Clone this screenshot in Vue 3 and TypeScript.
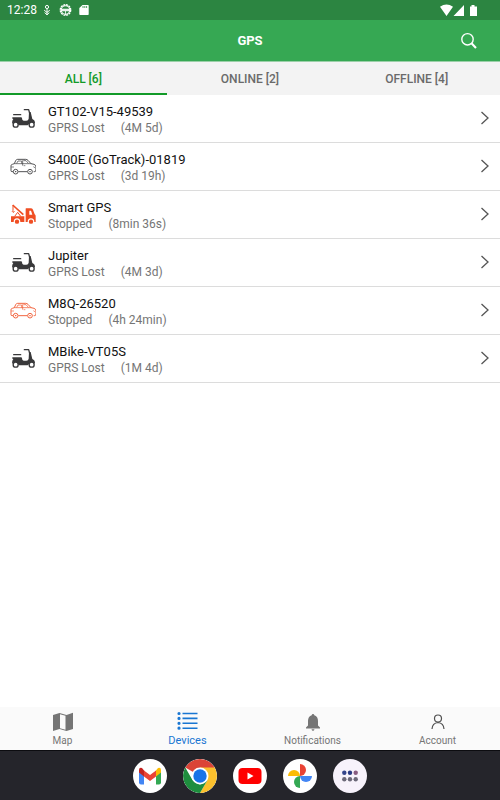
<script setup lang="ts">
import { computed, ref } from 'vue'

type Kind = 'scooter' | 'car' | 'tow'

interface Device {
  name: string
  status: string
  since: string
  kind: Kind
  stopped: boolean
}

const devices: Device[] = [
  { name: 'GT102-V15-49539', status: 'GPRS Lost', since: '(4M 5d)', kind: 'scooter', stopped: false },
  { name: 'S400E (GoTrack)-01819', status: 'GPRS Lost', since: '(3d 19h)', kind: 'car', stopped: false },
  { name: 'Smart GPS', status: 'Stopped', since: '(8min 36s)', kind: 'tow', stopped: true },
  { name: 'Jupiter', status: 'GPRS Lost', since: '(4M 3d)', kind: 'scooter', stopped: false },
  { name: 'M8Q-26520', status: 'Stopped', since: '(4h 24min)', kind: 'car', stopped: true },
  { name: 'MBike-VT05S', status: 'GPRS Lost', since: '(1M 4d)', kind: 'scooter', stopped: false },
]

const active = ref(0)
const tabs = computed(() => {
  const online = devices.filter((d) => d.stopped).length
  return [`ALL [${devices.length}]`, `ONLINE [${online}]`, `OFFLINE [${devices.length - online}]`]
})
const shown = computed(() =>
  devices.filter((d) => active.value === 0 || d.stopped === (active.value === 1)),
)
</script>

<template>
  <div class="screen">
    <div class="status">
      <time class="clock">12:28</time>
      <svg class="mic" width="8" height="12" viewBox="0 0 8 12" fill="none" stroke="currentColor">
        <circle cx="4" cy="3" r="1.6" />
        <path d="M4 5v6M1.2 6.2 4 8.4l2.800-2.200M1.600 8.500 4 10.800l2.400-2.300" />
      </svg>
      <svg class="gear" width="13" height="12" viewBox="0 0 13 12" fill="none" stroke="currentColor">
        <circle cx="6.500" cy="6" r="5.200" stroke-width="1.400" stroke-dasharray="2 .7" />
        <circle cx="6.500" cy="6" r="4.200" stroke-width="1.100" />
        <path d="M3 5.200h7v1.600H3zM6.500 7v4" fill="currentColor" stroke-width=".8" />
      </svg>
      <svg class="card" width="10" height="12" viewBox="0 0 10 12">
        <path d="M3.500 1H9q.7 0 .7.7v8.600q0 .7-.7.7H1q-.7 0-.7-.7V4z" fill="currentColor" />
        <path d="M4 2v2M5.800 2v2M7.600 2v2" stroke="#2c8541" stroke-width=".8" />
      </svg>
      <span class="spacer"></span>
      <svg width="38" height="14" viewBox="0 0 38 14" fill="currentColor">
        <path d="M0 3.800Q6.500-.8 13 3.800L6.500 13zM24 2V13H13.500zM30 3.500h1.500V2h3v1.500H37V13h-7z" />
      </svg>
    </div>

    <header class="bar">
      <h1>GPS</h1>
      <button class="search" type="button" aria-label="Search">
        <svg width="18" height="18" viewBox="0 0 18 18" fill="none" stroke="currentColor">
          <circle cx="7.500" cy="7.300" r="5.700" stroke-width="1.400" />
          <path d="m11.500 11.300 4.500 4.700" stroke-width="2.100" />
        </svg>
      </button>
    </header>

    <div class="tabs" role="tablist">
      <button
        v-for="(tab, i) in tabs"
        :key="i"
        type="button"
        role="tab"
        :aria-selected="active === i"
        :class="{ active: active === i }"
        @click="active = i"
      >{{ tab }}</button>
    </div>

    <main>
      <ul class="list">
        <li v-for="d in shown" :key="d.name">
          <button class="row" type="button">
            <svg class="vehicle" :class="{ stopped: d.stopped }" width="26" height="24" viewBox="0 0 78 72">
              <g v-if="d.kind === 'scooter'">
                <path d="M11 26h21" stroke="currentColor" stroke-width="4" stroke-linecap="round" />
                <path d="M43 11h13l3 11" fill="none" stroke="currentColor" stroke-width="4" stroke-linecap="round" stroke-linejoin="round" />
                <path d="M7 34h26q3 0 3 3 0 7 5 7h8q6 0 7-6l1-20h5l5 21q8 3 8 13H63q-6 0-9 5-1 1-3 1H27q-10-14-21-5 0-10 4-14l-3-1z" fill="currentColor" />
                <circle cx="17" cy="56" r="7.500" fill="#fff" stroke="currentColor" stroke-width="4" />
                <circle cx="65" cy="56" r="7.500" fill="#fff" stroke="currentColor" stroke-width="4" />
              </g>
              <g v-else-if="d.kind === 'car'" fill="none" stroke="currentColor" stroke-width="2.600" stroke-linejoin="round">
                <path d="M9 53H6q-3 0-3-3V35q0-3 4-4l6-2 4-9q2-4 6-4h24q4 0 7 3l9 10 9 2q6 2 6 8v9q0 5-5 5h-2M25 53h27" />
                <path d="M13 29h50M20 28l4-7h11v8M40 20h8l7 8M38 19v16" stroke-width="2" />
                <path d="M4 39h8M70 38l6 4M41 35h5" stroke-width="1.800" />
                <circle cx="17" cy="53" r="7" /><circle cx="60" cy="53" r="7" />
                <path d="M15 53h4M58 53h4" stroke-width="3" />
              </g>
              <g v-else fill="currentColor">
                <path d="M3 43h40v17H31q0-11-10-11t-10 11H3zM48 19h14q5 0 7 4l5 14q3 2 3 5v18h-4q0-11-10-11t-10 11h-6V21q0-2 1-2z" />
                <path d="M58 26h5l4 12h-9z" fill="#fff" />
                <path d="m8 9 32 29" stroke="currentColor" stroke-width="5" />
                <path d="M9 10v15q-4 4 0 6 4-1 4-4M14 43l9-12 9 12" fill="none" stroke="currentColor" stroke-width="3" />
                <circle cx="21" cy="59" r="6.500" /><circle cx="63" cy="59" r="6.500" />
              </g>
            </svg>
            <span class="info">
              <span class="name">{{ d.name }}</span>
              <span class="detail"><span>{{ d.status }}</span><span>{{ d.since }}</span></span>
            </span>
            <svg class="chevron" width="10" height="14" viewBox="0 0 10 14" fill="none" stroke="currentColor" stroke-width="1.300">
              <path d="m1.500 1 6.500 6-6.500 6" />
            </svg>
          </button>
        </li>
      </ul>
    </main>

    <nav class="nav">
      <a href="#map">
        <svg width="22" height="20" viewBox="0 0 22 20">
          <path d="m1 3 6.500-2 7 2L21 .8V17l-6.500 2-7-2L1 19z" fill="currentColor" />
          <path d="m8 2.200 5.500 1.500v14L8 16.200z" fill="#fafafa" />
        </svg>
        <span>Map</span>
      </a>
      <a href="#devices" class="current" aria-current="page">
        <svg width="22" height="20" viewBox="0 0 22 20" fill="none" stroke="currentColor">
          <path d="M5.500 2.500h15M5.500 7.400h15M5.500 12.300h15M5.500 17.200h15" stroke-width="1.600" />
          <path d="M2 2.500h.01M2 7.400h.01M2 12.300h.01M2 17.200h.01" stroke-width="3.200" stroke-linecap="round" />
        </svg>
        <span>Devices</span>
      </a>
      <a href="#notifications">
        <svg width="22" height="20" viewBox="0 0 22 20" fill="currentColor">
          <path d="M11 2q1.200 0 1.300 1.300Q16 4.500 16 9v4.500l2 2v1H4v-1l2-2V9q0-4.500 3.700-5.700Q9.800 2 11 2zM9.500 17.200h3q-.3 1.500-1.500 1.500t-1.500-1.500z" />
        </svg>
        <span>Notifications</span>
      </a>
      <a href="#account">
        <svg width="22" height="20" viewBox="0 0 22 20" fill="none" stroke="#505050" stroke-width="1.200">
          <circle cx="11" cy="6.500" r="3.500" />
          <path d="M5 17q.4-6 6-6.500 5.600.5 6 6.500" />
        </svg>
        <span>Account</span>
      </a>
    </nav>

    <footer class="dock">
      <button type="button" aria-label="Gmail">
        <svg viewBox="0 0 34 34">
          <path d="M6 12v11.500q0 2 2 2h3V15z" fill="#4285f4" />
          <path d="M28 12v11.500q0 2-2 2h-3V15z" fill="#34a853" />
          <path d="M23 11.500v6l5-4V11q0-3-3-2z" fill="#fbbc04" />
          <path d="m11 11.500 6 4.500 6-4.500v6L17 22l-6-4.500z" fill="#ea4335" />
          <path d="M11 11.500v6l-5-4V11q0-3 3-2z" fill="#c5221f" />
        </svg>
      </button>
      <button type="button" aria-label="Chrome">
        <svg viewBox="0 0 34 34">
          <path d="M17 17 2.300 8.500A17 17 0 0 1 31.700 8.500z" fill="#db4437" />
          <path d="M17 17v-8.500h14.700A17 17 0 0 1 17 34l7.400-12.700z" fill="#fbc02d" />
          <path d="m9.600 21.300 7.400 4.200 7.400-4.200L17 34A17 17 0 0 1 2.300 8.500z" fill="#1e8e3e" />
          <circle cx="17" cy="17" r="8.500" fill="#fff" />
          <circle cx="17" cy="17" r="6.700" fill="#1a73e8" />
        </svg>
      </button>
      <button type="button" aria-label="YouTube">
        <svg viewBox="0 0 34 34">
          <rect x="5.500" y="9" width="23" height="16" rx="4" fill="#f00" />
          <path d="m14.500 13.500 6 3.500-6 3.500z" fill="#fff" />
        </svg>
      </button>
      <button type="button" aria-label="Photos">
        <svg viewBox="0 0 34 34">
          <path d="M17 5a6 6 0 0 1 0 12z" fill="#ea4335" />
          <path d="M29 17a6 6 0 0 1-12 0z" fill="#4285f4" />
          <path d="M17 29a6 6 0 0 1 0-12z" fill="#34a853" />
          <path d="M5 17a6 6 0 0 1 12 0z" fill="#fbbc04" />
        </svg>
      </button>
      <button type="button" class="apps" aria-label="All apps">
        <svg viewBox="0 0 34 34" fill="#6b6878">
          <circle cx="11.300" cy="13.700" r="2.200" fill="#34458b" />
          <circle cx="17" cy="13.700" r="2.200" fill="#293a83" />
          <circle cx="22.700" cy="13.700" r="2.200" fill="#885b80" />
          <circle cx="11.300" cy="20.300" r="2.200" />
          <circle cx="17" cy="20.300" r="2.200" />
          <circle cx="22.700" cy="20.300" r="2.200" />
        </svg>
      </button>
    </footer>
  </div>
</template>

<style>
body {
  margin: 0;
  background: #fff;
}
</style>

<style scoped>
.screen {
  display: flex;
  flex-direction: column;
  min-height: 100vh;
  font-family: Roboto, "Liberation Sans", sans-serif;
  color: #111;
}
button {
  margin: 0;
  padding: 0;
  border: 0;
  background: none;
  font: inherit;
  color: inherit;
  cursor: pointer;
}
svg {
  display: block;
  flex: none;
}
.status {
  display: flex;
  align-items: center;
  height: 20px;
  padding: 0 22px 0 7px;
  background: #2c8541;
  color: #fff;
}
.clock {
  font-size: 12px;
  line-height: 20px;
}
.mic {
  margin-left: 6px;
}
.gear {
  margin-left: 8px;
}
.card {
  margin-left: 7px;
}
.spacer {
  flex: 1;
}
.bar {
  display: grid;
  grid-template-columns: 1fr auto 1fr;
  align-items: center;
  height: 41px;
  padding: 0 22px;
  background: #36a853;
  color: #fff;
  border-bottom: 1px solid #9bd0a8;
}
h1 {
  grid-column: 2;
  margin: 0;
  font-size: 13px;
  line-height: 16px;
  font-weight: 700;
}
.search {
  justify-self: end;
}
.tabs {
  display: grid;
  grid-template-columns: repeat(3, 1fr);
  background: #f3f3f3;
}
.tabs button {
  height: 33px;
  border-top: 2px solid transparent;
  border-bottom: 2px solid transparent;
  font-size: 12px;
  font-weight: 500;
  color: #6a6a6a;
}
.tabs .active {
  color: #129a28;
  border-bottom-color: #129a28;
}
main {
  flex: 1;
}
.list {
  margin: 0;
  padding: 0;
  list-style: none;
}
.list li {
  border-bottom: 1px solid #dcdcdc;
}
.row {
  display: flex;
  align-items: center;
  width: 100%;
  height: 47px;
  padding: 0 10px 1px;
  text-align: left;
}
.vehicle {
  color: #38383a;
}
.vehicle.stopped {
  color: #f04e23;
}
.info {
  display: flex;
  flex: 1;
  flex-direction: column;
  padding-top: 3px;
  margin-left: 12px;
}
.name {
  font-size: 13px;
  line-height: 17px;
}
.detail {
  display: flex;
  gap: 16px;
  font-size: 12px;
  line-height: 16px;
  color: #757575;
}
.chevron {
  color: #555;
}
.nav {
  display: grid;
  grid-template-columns: repeat(4, 1fr);
  height: 43px;
  background: #fafafa;
}
.nav a {
  display: flex;
  flex-direction: column;
  align-items: center;
  gap: 1px;
  padding-top: 5px;
  font-size: 10px;
  line-height: 16px;
  color: #757575;
  text-decoration: none;
}
.nav .current {
  gap: 2px;
  padding-top: 4px;
  font-size: 11px;
  color: #1976d2;
}
.dock {
  display: flex;
  align-items: center;
  justify-content: center;
  gap: 16px;
  height: 49px;
  border-top: 1px solid #0c0c10;
  background: #25252b;
}
.dock button {
  width: 34px;
  height: 34px;
  overflow: hidden;
  border-radius: 50%;
  background: #fff;
}
.dock .apps {
  background: #f7f2fb;
}
</style>
